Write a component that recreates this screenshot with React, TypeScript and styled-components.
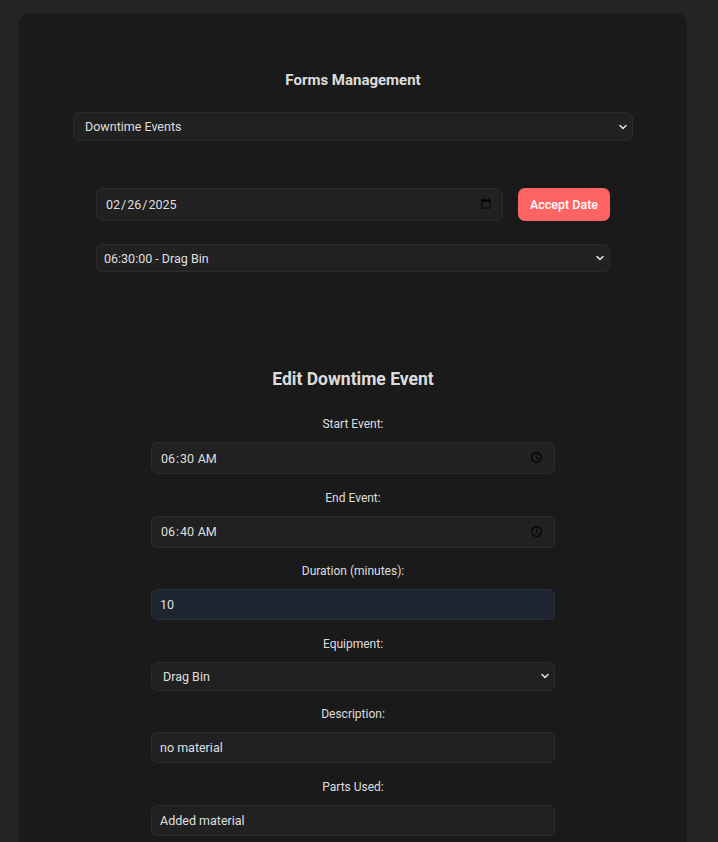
import React from 'react'
import styled, { createGlobalStyle } from 'styled-components'

const GlobalStyle = createGlobalStyle`
    body {
        margin: 0;
        background: #242424;
        color: rgba(255, 255, 255, 0.87);
        font-family: Roboto, "Liberation Sans", sans-serif;
    }
`

const Page = styled.div`
    padding: 13px 0 0 19px;
`

const Card = styled.main`
    width: 668px;
    box-sizing: border-box;
    min-height: 840px;
    padding: 58px 54px 0;
    background: #1a1a1a;
    border-radius: 10px 10px 0 0;
`

const Title = styled.h2`
    margin: 0;
    font-size: 15px;
    line-height: 18px;
    font-weight: 700;
    text-align: center;
`

const SelectWrap = styled.div<{ $top?: number }>`
    position: relative;
    margin-top: ${({ $top }) => $top || 0}px;
`

const Select = styled.select<{ $height?: number; $pad?: number }>`
    display: block;
    width: 100%;
    height: ${({ $height }) => $height || 29}px;
    box-sizing: border-box;
    padding: 0 24px 0 ${({ $pad }) => $pad || 11}px;
    appearance: none;
    background: #212121;
    color: rgba(255, 255, 255, 0.87);
    border: 1px solid #2b2b2b;
    border-radius: 6px;
    font-family: inherit;
    font-size: 12.5px;
`

const Chevron = styled.svg`
    position: absolute;
    right: 6px;
    top: 50%;
    width: 8px;
    height: 6px;
    margin-top: -3px;
    pointer-events: none;
`

const Panel = styled.section`
    margin: 24px 0 0;
    padding: 23px;
    border-radius: 8px;
    box-shadow: 0 2px 8px rgba(0, 0, 0, 0.12);
    display: flex;
    flex-direction: column;
    gap: 23px;
`

const DateRow = styled.div`
    display: flex;
    gap: 15px;
`

const Input = styled.input<{ $tint?: boolean; $height?: number }>`
    display: block;
    width: 100%;
    height: ${({ $height }) => $height || 31}px;
    box-sizing: border-box;
    padding: 0 8px;
    background: ${({ $tint }) => ($tint ? '#1e2531' : '#212121')};
    color: rgba(255, 255, 255, 0.87);
    border: 1px solid ${({ $tint }) => ($tint ? '#252d39' : '#2b2b2b')};
    border-radius: 6px;
    font-family: inherit;
    font-size: 12.5px;
`

const DateInput = styled(Input)`
    flex: 1;
`

const AcceptButton = styled.button`
    flex: none;
    width: 92px;
    height: 33px;
    border: none;
    border-radius: 7px;
    background: #ff6464;
    color: #fff;
    font-family: inherit;
    font-size: 12.5px;
    font-weight: 500;
    cursor: pointer;
`

const EditSection = styled.section`
    margin-top: 73px;
    display: flex;
    flex-direction: column;
    align-items: center;
`

const Heading = styled.h3`
    margin: 0 0 27px;
    font-size: 17.5px;
    line-height: 22px;
    font-weight: 700;
`

const Form = styled.form`
    width: 404px;
    display: flex;
    flex-direction: column;
    gap: 16.5px;
`

const Field = styled.div`
    display: flex;
    flex-direction: column;
`

const Label = styled.label`
    margin-bottom: 10px;
    font-size: 12px;
    line-height: 15px;
    text-align: center;
`

const ChevronIcon = () => (
    <Chevron viewBox="0 0 8 6">
        <path d="M1 1.5 L4 4.5 L7 1.5" fill="none" stroke="#e0e0e0" strokeWidth="1.6" strokeLinecap="round" strokeLinejoin="round" />
    </Chevron>
)

const App = () => {
    return (
        <>
            <GlobalStyle />
            <Page>
                <Card>
                    <Title>Forms Management</Title>
                    <SelectWrap $top={23}>
                        <Select defaultValue="downtime">
                            <option value="downtime">Downtime Events</option>
                        </Select>
                        <ChevronIcon />
                    </SelectWrap>

                    <Panel>
                        <DateRow>
                            <DateInput $height={33} type="date" defaultValue="2025-02-26" />
                            <AcceptButton>Accept Date</AcceptButton>
                        </DateRow>
                        <SelectWrap>
                            <Select $height={28} $pad={7} defaultValue="e1">
                                <option value="e1">06:30:00 - Drag Bin</option>
                            </Select>
                            <ChevronIcon />
                        </SelectWrap>
                    </Panel>

                    <EditSection>
                        <Heading>Edit Downtime Event</Heading>
                        <Form>
                            <Field>
                                <Label>Start Event:</Label>
                                <Input $height={32} type="time" defaultValue="06:30" />
                            </Field>
                            <Field>
                                <Label>End Event:</Label>
                                <Input $height={32} type="time" defaultValue="06:40" />
                            </Field>
                            <Field>
                                <Label>Duration (minutes):</Label>
                                <Input $tint type="text" defaultValue="10" />
                            </Field>
                            <Field>
                                <Label>Equipment:</Label>
                                <SelectWrap>
                                    <Select defaultValue="drag">
                                        <option value="drag">Drag Bin</option>
                                    </Select>
                                    <ChevronIcon />
                                </SelectWrap>
                            </Field>
                            <Field>
                                <Label>Description:</Label>
                                <Input type="text" defaultValue="no material" />
                            </Field>
                            <Field>
                                <Label>Parts Used:</Label>
                                <Input type="text" defaultValue="Added material" />
                            </Field>
                        </Form>
                    </EditSection>
                </Card>
            </Page>
        </>
    )
}

export default App
